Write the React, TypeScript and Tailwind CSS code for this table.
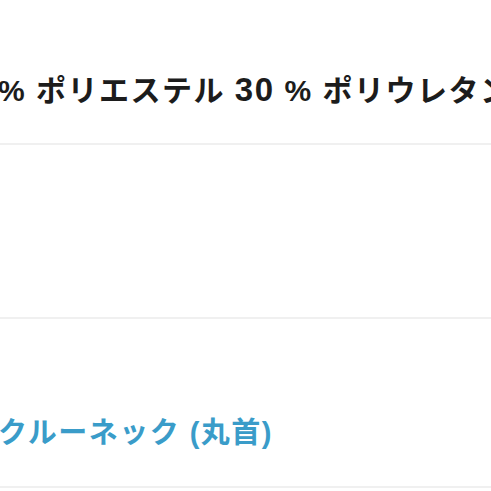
export default function App() {
  return (
    <div
      className="w-[491px] h-[491px] overflow-hidden bg-white"
      style={{ fontFamily: '"Liberation Sans", "Noto Sans CJK JP", sans-serif' }}
    >
      <div className="h-[145px] flex items-end pb-[37px] border-b-2 border-[#f0f0f0]">
        <p className="whitespace-nowrap ml-[-2px] text-[30px] leading-none font-bold tracking-[1.5px] text-[#1c1c1c]">
          % ポリエステル <span className="text-[33px]">30</span> % ポリウレタン
        </p>
      </div>
      <div className="h-[174px] border-b-2 border-[#f0f0f0]" />
      <div className="h-[169px] flex items-end pb-[38px] border-b-2 border-[#f0f0f0]">
        <p className="whitespace-nowrap ml-[-2px] text-[29px] leading-none font-bold tracking-[1.5px] text-[#3a9cc9]">
          クルーネック (丸首)
        </p>
      </div>
    </div>
  )
}
